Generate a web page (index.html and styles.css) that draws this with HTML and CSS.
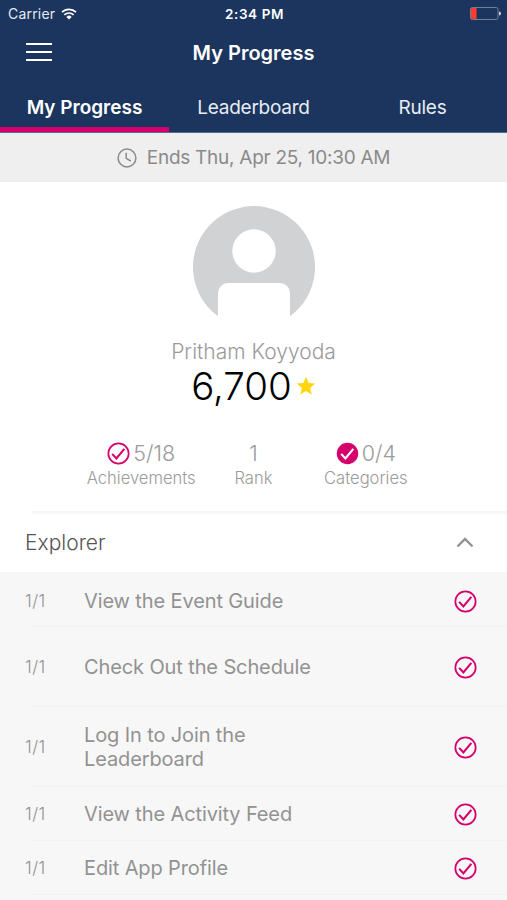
FILE: index.html
```html
<!DOCTYPE html>
<html lang="en">

<head>
    <meta charset="UTF-8">
    <meta name="viewport" content="width=device-width, initial-scale=1">
    <title>My Progress</title>
    <link rel="stylesheet" href="styles.css">
</head>

<body>
    <svg class="sprite">
        <symbol id="check" viewBox="0 0 24 24">
            <circle cx="12" cy="12" r="10.6" fill="none" stroke="currentColor" stroke-width="1.8" />
            <path d="M5.4 12.4l4.4 4.7 8.3-9.9" fill="none" stroke="currentColor" stroke-width="2.2" />
        </symbol>
    </svg>

    <header class="header">
        <div class="status-bar">
            <div class="carrier">
                <span>Carrier</span>
                <svg class="wifi" viewBox="0 0 16 12" fill="none" stroke="#fff" stroke-width="1.7">
                    <path d="M1 4.2a10 10 0 0 1 14 0M3.4 6.9a6.5 6.5 0 0 1 9.2 0" />
                    <path d="M8 11.5L5.4 8.9a3.7 3.7 0 0 1 5.2 0z" fill="#fff" stroke="none" />
                </svg>
            </div>
            <span class="time">2:34 PM</span>
            <svg class="battery" viewBox="0 0 31 13">
                <rect x="0.5" y="0.5" width="27.5" height="12" rx="1.8" fill="none" stroke="#71809a" />
                <path d="M1.5 1H6.5V12H1.5Q1 12 1 11.5V1.5Q1 1 1.5 1z" fill="#ff3b30" />
                <path d="M29 4.5a2 2 0 0 1 0 4z" fill="#cdd3dd" />
            </svg>
        </div>
        <div class="title-bar">
            <button class="menu" aria-label="Menu"><span></span><span></span><span></span></button>
            <h1>My Progress</h1>
        </div>
        <nav class="tabs">
            <a class="tab active" href="#">My Progress</a>
            <a class="tab" href="#">Leaderboard</a>
            <a class="tab" href="#">Rules</a>
        </nav>
    </header>

    <div class="banner">
        <svg class="clock" viewBox="0 0 20 20" fill="none" stroke="#8a8a8a" stroke-width="1.5">
            <circle cx="10" cy="10" r="8.9" />
            <path d="M9.2 4.8v5.6l4.6 2.6" />
        </svg>
        <span>Ends Thu, Apr 25, 10:30 AM</span>
    </div>

    <section class="profile">
        <svg class="avatar" viewBox="0 0 122 122">
            <path d="M25 110.3A61 61 0 1 1 97 110.3V87a10 10 0 0 0-10-10H35a10 10 0 0 0-10 10z" fill="#d0d2d3" />
            <circle cx="61" cy="45" r="21.7" fill="#fff" />
        </svg>
        <div class="name">Pritham Koyyoda</div>
        <div class="points">
            <span>6,700</span>
            <svg class="star" viewBox="0 0 20 20">
                <path d="M10 .8l2.500 6.200 6.700.500-5.100 4.400 1.600 6.600-5.700-3.500-5.700 3.500 1.600-6.600L.8 7.500l6.700-.500z" fill="#ffd60a" />
            </svg>
        </div>
        <div class="stats">
            <div class="stat">
                <div class="value"><svg class="check"><use href="#check" /></svg><span>5/18</span></div>
                <div class="label">Achievements</div>
            </div>
            <div class="stat">
                <div class="value"><span>1</span></div>
                <div class="label">Rank</div>
            </div>
            <div class="stat">
                <div class="value">
                    <svg class="check" viewBox="0 0 24 24">
                        <circle cx="12" cy="12" r="11.2" fill="currentColor" />
                        <path d="M5.4 12.4l4.4 4.7 8.3-9.9" fill="none" stroke="#fff" stroke-width="2.2" />
                    </svg>
                    <span>0/4</span>
                </div>
                <div class="label">Categories</div>
            </div>
        </div>
    </section>

    <section>
        <div class="category">
            <h2>Explorer</h2>
            <svg class="chevron" viewBox="0 0 18 11" fill="none" stroke="#929292" stroke-width="2.4">
                <path d="M1.500 9.500L9 2l7.500 7.500" />
            </svg>
        </div>
        <ul class="tasks">
            <li class="task first">
                <span class="count">1/1</span>
                <span class="task-name">View the Event Guide</span>
                <svg class="check"><use href="#check" /></svg>
            </li>
            <li class="task tall">
                <span class="count">1/1</span>
                <span class="task-name">Check Out the Schedule</span>
                <svg class="check"><use href="#check" /></svg>
            </li>
            <li class="task tall">
                <span class="count">1/1</span>
                <span class="task-name">Log In to Join the<br>Leaderboard</span>
                <svg class="check"><use href="#check" /></svg>
            </li>
            <li class="task">
                <span class="count">1/1</span>
                <span class="task-name">View the Activity Feed</span>
                <svg class="check"><use href="#check" /></svg>
            </li>
            <li class="task">
                <span class="count">1/1</span>
                <span class="task-name">Edit App Profile</span>
                <svg class="check"><use href="#check" /></svg>
            </li>
        </ul>
    </section>
</body>

</html>
```

FILE: styles.css
```css
* {
    box-sizing: border-box;
}

body {
    font-family: Inter, "Liberation Sans", sans-serif;
    margin: 0;
    height: 900px;
    overflow: hidden;
    background: #fff;
    color: #9b9b9b;
}

.sprite {
    display: none;
}

.header {
    height: 133px;
    background: #1c355e;
    color: #fff;
    border-bottom: 1px solid #5a6c8b;
}

.status-bar {
    display: grid;
    grid-template-columns: 1fr auto 1fr;
    align-items: center;
    height: 27px;
    padding: 0 6px 0 8px;
    font-size: 14px;
}

.carrier {
    display: flex;
    align-items: center;
    gap: 6px;
    color: #e6eaf1;
    letter-spacing: 0.2px;
}

.wifi {
    width: 16px;
    height: 12px;
}

.time {
    font-size: 13.5px;
    font-weight: 600;
    letter-spacing: 0.6px;
}

.battery {
    width: 31px;
    height: 13px;
    justify-self: end;
}

.title-bar {
    display: grid;
    grid-template-columns: 26px 1fr 26px;
    align-items: center;
    height: 51px;
    padding: 0 26px;
}

.title-bar h1 {
    margin: 0;
    text-align: center;
    font-size: 20px;
    font-weight: 600;
}

.menu {
    display: flex;
    flex-direction: column;
    gap: 6px;
    width: 26px;
    margin-top: -2px;
    padding: 0;
    border: none;
    background: none;
}

.menu span {
    width: 26px;
    height: 2px;
    background: #fff;
}

.tabs {
    display: flex;
    height: 54px;
}

.tab {
    flex: 1;
    padding-top: 17px;
    text-align: center;
    font-size: 19px;
    line-height: 26px;
    letter-spacing: -0.25px;
    color: #e8ecf3;
    text-decoration: none;
}

.tab.active {
    color: #fff;
    font-weight: 600;
    letter-spacing: 0;
    border-bottom: 5px solid #d6006d;
}

.banner {
    display: flex;
    justify-content: center;
    align-items: center;
    gap: 10px;
    height: 49px;
    background: #efefef;
    color: #8a8a8a;
    font-size: 19px;
    letter-spacing: -0.27px;
}

.clock {
    width: 20px;
    height: 20px;
}

.profile {
    display: flex;
    flex-direction: column;
    align-items: center;
    height: 329px;
    padding-top: 24px;
}

.avatar {
    width: 122px;
    height: 122px;
}

.name {
    margin-top: 10px;
    font-size: 21px;
    font-weight: 300;
    line-height: 28px;
}

.points {
    display: flex;
    align-items: center;
    gap: 4px;
    color: #000;
    font-size: 38.5px;
    font-weight: 300;
    line-height: 40px;
}

.star {
    width: 20px;
    height: 20px;
}

.stats {
    display: grid;
    grid-template-columns: repeat(3, 1fr);
    width: 337px;
    margin-top: 34px;
    text-align: center;
}

.value {
    display: flex;
    justify-content: center;
    align-items: center;
    gap: 3px;
    height: 26px;
    font-size: 21.5px;
    font-weight: 300;
}

.label {
    font-size: 16.6px;
    font-weight: 300;
    line-height: 24px;
}

.check {
    width: 23px;
    height: 23px;
    color: #d6006d;
}

.category {
    display: flex;
    justify-content: space-between;
    align-items: center;
    height: 61px;
    padding: 2px 33px 0 25px;
    background: linear-gradient(#f6f6f6, #f6f6f6) 32px 0 / 100% 3px no-repeat;
}

.category h2 {
    margin: 0;
    color: #555;
    font-size: 21px;
    font-weight: 300;
}

.chevron {
    width: 18px;
    height: 11px;
}

.tasks {
    margin: 0;
    padding: 0;
    list-style: none;
    background: #f7f7f7;
    height: 328px;
}

.task {
    display: grid;
    grid-template-columns: 59px 1fr 23px;
    align-items: center;
    height: 54px;
    padding: 0 30px 0 25px;
    color: #929292;
    background: linear-gradient(#f2f2f2, #f2f2f2) 32px 100% / 100% 1px no-repeat;
}

.task.first {
    height: 55px;
    padding-top: 3px;
}

.task.tall {
    height: 80px;
}

.count {
    font-size: 17px;
    font-weight: 300;
    letter-spacing: 0.5px;
}

.task-name {
    font-size: 20px;
    line-height: 24px;
    letter-spacing: -0.12px;
}
```
